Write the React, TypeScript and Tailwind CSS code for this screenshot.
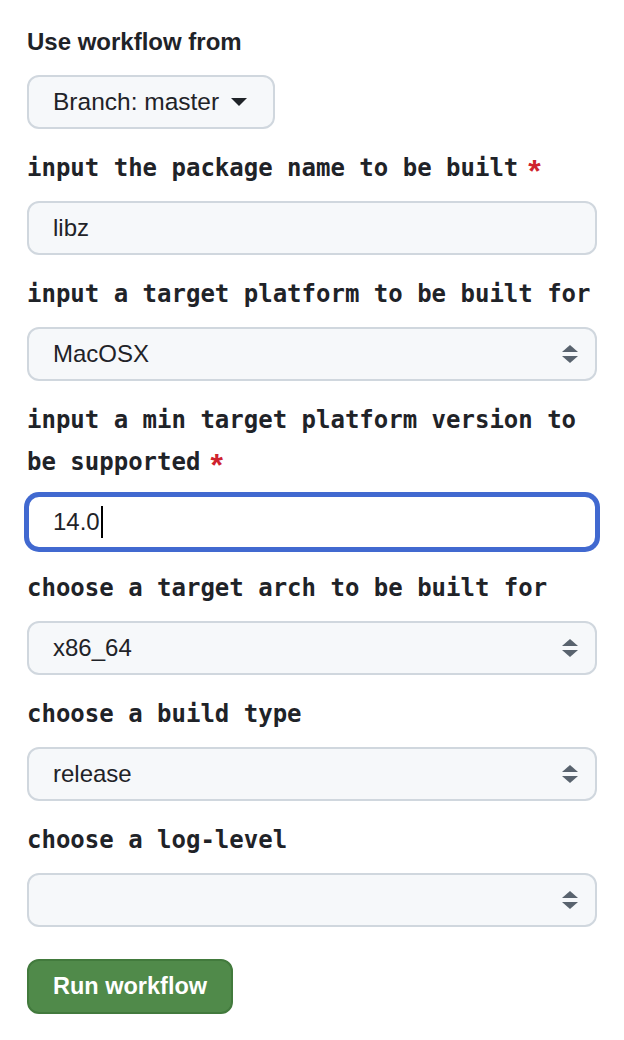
import React from 'react';

const mono = { fontFamily: '"DejaVu Sans Mono", "Liberation Mono", monospace' };
const sans = { fontFamily: '"Liberation Sans", Arial, sans-serif' };

function Label({ text, required }: { text: string; required?: boolean }) {
  return (
    <div className="mb-3 text-[24px] leading-[42px] font-bold text-[#1f2328]" style={mono}>
      {text}
      {required && (
        <span className="ml-[10px] inline-block align-[-6px] text-[32px] leading-[20px] text-[#cf222e]" style={sans}>
          *
        </span>
      )}
    </div>
  );
}

function UpDown() {
  return (
    <svg width="18" height="20" viewBox="0 0 18 20" className="text-[#59636e]">
      <path d="M9 1 L17 8 L1 8 Z" fill="currentColor" />
      <path d="M1 12 L17 12 L9 19 Z" fill="currentColor" />
    </svg>
  );
}

function Select({ value }: { value: string }) {
  return (
    <div
      className="mb-[18px] flex h-[54px] items-center justify-between rounded-[12px] border-2 border-[#d0d7de] bg-[#f6f8fa] pl-6 pr-4 text-[24px] text-[#1f2328]"
      style={sans}
    >
      <span>{value}</span>
      <UpDown />
    </div>
  );
}

export default function App() {
  return (
    <div className="min-h-screen bg-white px-[27px] pt-[21px]">
      <div className="mb-3 text-[24px] leading-[42px] font-bold text-[#1f2328]" style={sans}>
        Use workflow from
      </div>
      <button
        className="mb-[18px] flex h-[54px] items-center gap-3 rounded-[12px] border-2 border-[#d0d7de] bg-[#f6f8fa] pl-6 pr-[26px] text-[24.5px] text-[#1f2328]"
        style={sans}
      >
        Branch: master
        <svg width="16" height="8" viewBox="0 0 16 8">
          <path d="M0 0 L16 0 L8 8 Z" fill="#1f2328" />
        </svg>
      </button>

      <Label text="input the package name to be built" required />
      <div
        className="mb-[18px] flex h-[54px] items-center rounded-[12px] border-2 border-[#d0d7de] bg-[#f6f8fa] px-6 text-[24px] text-[#1f2328]"
        style={sans}
      >
        libz
      </div>

      <Label text="input a target platform to be built for" />
      <Select value="MacOSX" />

      <Label text="input a min target platform version to be supported" required />
      <div
        className="mb-[18px] flex h-[54px] items-center rounded-[12px] border-2 border-[#4169d0] bg-white px-6 text-[24px] text-[#1f2328] ring-[3px] ring-[#4169d0]"
        style={sans}
      >
        14.0
        <span className="ml-[1px] h-[32px] w-[2px] bg-black" />
      </div>

      <Label text="choose a target arch to be built for" />
      <Select value="x86_64" />

      <Label text="choose a build type" />
      <Select value="release" />

      <Label text="choose a log-level" />
      <Select value="" />

      <button
        className="mt-[32px] flex h-[55px] items-center rounded-[12px] border-2 border-[#427a3d] bg-[#508a4a] px-[24px] text-[23.5px] font-bold text-white"
        style={sans}
      >
        Run workflow
      </button>
    </div>
  );
}
